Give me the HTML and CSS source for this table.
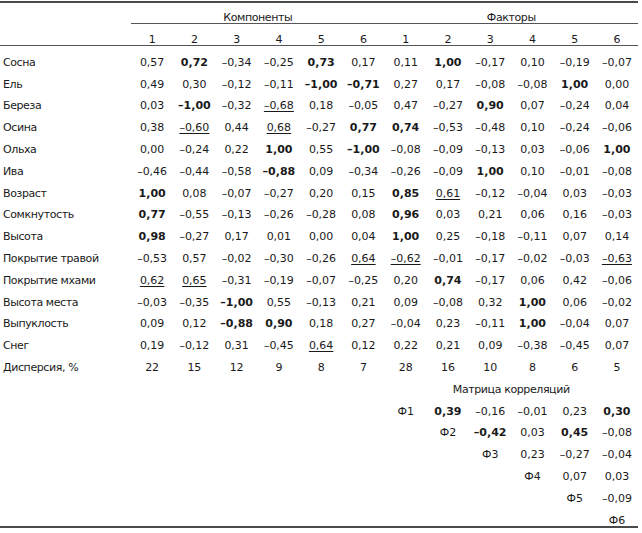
FILE: index.html
```html
<!DOCTYPE html>
<html lang="ru">
<head>
<meta charset="utf-8">
<title>Компоненты и факторы</title>
<link rel="stylesheet" href="styles.css">
</head>
<body>
<table class="tbl">
<colgroup>
<col class="c-label">
<col class="c-num"><col class="c-num"><col class="c-num"><col class="c-num"><col class="c-num"><col class="c-num">
<col class="c-num"><col class="c-num"><col class="c-num"><col class="c-num"><col class="c-num"><col class="c-num">
</colgroup>
<thead>
<tr class="h1">
<th></th>
<th colspan="6" class="grp">Компоненты</th>
<th colspan="6" class="grp">Факторы</th>
</tr>
<tr class="h2">
<th></th>
<th>1</th><th>2</th><th>3</th><th>4</th><th>5</th><th>6</th>
<th>1</th><th>2</th><th>3</th><th>4</th><th>5</th><th>6</th>
</tr>
</thead>
<tbody>
<tr><td class="lbl">Сосна</td><td>0,57</td><td><b>0,72</b></td><td>–0,34</td><td>–0,25</td><td><b>0,73</b></td><td>0,17</td><td>0,11</td><td><b>1,00</b></td><td>–0,17</td><td>0,10</td><td>–0,19</td><td>–0,07</td></tr>
<tr><td class="lbl">Ель</td><td>0,49</td><td>0,30</td><td>–0,12</td><td>–0,11</td><td><b>–1,00</b></td><td><b>–0,71</b></td><td>0,27</td><td>0,17</td><td>–0,08</td><td>–0,08</td><td><b>1,00</b></td><td>0,00</td></tr>
<tr><td class="lbl">Береза</td><td>0,03</td><td><b>–1,00</b></td><td>–0,32</td><td><u>–0,68</u></td><td>0,18</td><td>–0,05</td><td>0,47</td><td>–0,27</td><td><b>0,90</b></td><td>0,07</td><td>–0,24</td><td>0,04</td></tr>
<tr><td class="lbl">Осина</td><td>0,38</td><td><u>–0,60</u></td><td>0,44</td><td><u>0,68</u></td><td>–0,27</td><td><b>0,77</b></td><td><b>0,74</b></td><td>–0,53</td><td>–0,48</td><td>0,10</td><td>–0,24</td><td>–0,06</td></tr>
<tr><td class="lbl">Ольха</td><td>0,00</td><td>–0,24</td><td>0,22</td><td><b>1,00</b></td><td>0,55</td><td><b>–1,00</b></td><td>–0,08</td><td>–0,09</td><td>–0,13</td><td>0,03</td><td>–0,06</td><td><b>1,00</b></td></tr>
<tr><td class="lbl">Ива</td><td>–0,46</td><td>–0,44</td><td>–0,58</td><td><b>–0,88</b></td><td>0,09</td><td>–0,34</td><td>–0,26</td><td>–0,09</td><td><b>1,00</b></td><td>0,10</td><td>–0,01</td><td>–0,08</td></tr>
<tr><td class="lbl">Возраст</td><td><b>1,00</b></td><td>0,08</td><td>–0,07</td><td>–0,27</td><td>0,20</td><td>0,15</td><td><b>0,85</b></td><td><u>0,61</u></td><td>–0,12</td><td>–0,04</td><td>0,03</td><td>–0,03</td></tr>
<tr><td class="lbl">Сомкнутость</td><td><b>0,77</b></td><td>–0,55</td><td>–0,13</td><td>–0,26</td><td>–0,28</td><td>0,08</td><td><b>0,96</b></td><td>0,03</td><td>0,21</td><td>0,06</td><td>0,16</td><td>–0,03</td></tr>
<tr><td class="lbl">Высота</td><td><b>0,98</b></td><td>–0,27</td><td>0,17</td><td>0,01</td><td>0,00</td><td>0,04</td><td><b>1,00</b></td><td>0,25</td><td>–0,18</td><td>–0,11</td><td>0,07</td><td>0,14</td></tr>
<tr><td class="lbl">Покрытие травой</td><td>–0,53</td><td>0,57</td><td>–0,02</td><td>–0,30</td><td>–0,26</td><td><u>0,64</u></td><td><u>–0,62</u></td><td>–0,01</td><td>–0,17</td><td>–0,02</td><td>–0,03</td><td><u>–0,63</u></td></tr>
<tr><td class="lbl">Покрытие мхами</td><td><u>0,62</u></td><td><u>0,65</u></td><td>–0,31</td><td>–0,19</td><td>–0,07</td><td>–0,25</td><td>0,20</td><td><b>0,74</b></td><td>–0,17</td><td>0,06</td><td>0,42</td><td>–0,06</td></tr>
<tr><td class="lbl">Высота места</td><td>–0,03</td><td>–0,35</td><td><b>–1,00</b></td><td>0,55</td><td>–0,13</td><td>0,21</td><td>0,09</td><td>–0,08</td><td>0,32</td><td><b>1,00</b></td><td>0,06</td><td>–0,02</td></tr>
<tr><td class="lbl">Выпуклость</td><td>0,09</td><td>0,12</td><td><b>–0,88</b></td><td><b>0,90</b></td><td>0,18</td><td>0,27</td><td>–0,04</td><td>0,23</td><td>–0,11</td><td><b>1,00</b></td><td>–0,04</td><td>0,07</td></tr>
<tr><td class="lbl">Снег</td><td>0,19</td><td>–0,12</td><td>0,31</td><td>–0,45</td><td><u>0,64</u></td><td>0,12</td><td>0,22</td><td>0,21</td><td>0,09</td><td>–0,38</td><td>–0,45</td><td>0,07</td></tr>
<tr><td class="lbl">Дисперсия, %</td><td>22</td><td>15</td><td>12</td><td>9</td><td>8</td><td>7</td><td>28</td><td>16</td><td>10</td><td>8</td><td>6</td><td>5</td></tr>
<tr><td></td><td colspan="6"></td><td colspan="6" class="title">Матрица корреляций</td></tr>
<tr><td></td><td colspan="6"></td><td>Ф1</td><td><b>0,39</b></td><td>–0,16</td><td>–0,01</td><td>0,23</td><td><b>0,30</b></td></tr>
<tr><td></td><td colspan="6"></td><td></td><td>Ф2</td><td><b>–0,42</b></td><td>0,03</td><td><b>0,45</b></td><td>–0,08</td></tr>
<tr><td></td><td colspan="6"></td><td></td><td></td><td>Ф3</td><td>0,23</td><td>–0,27</td><td>–0,04</td></tr>
<tr><td></td><td colspan="6"></td><td></td><td></td><td></td><td>Ф4</td><td>0,07</td><td>0,03</td></tr>
<tr><td></td><td colspan="6"></td><td></td><td></td><td></td><td></td><td>Ф5</td><td>–0,09</td></tr>
<tr><td></td><td colspan="6"></td><td></td><td></td><td></td><td></td><td></td><td>Ф6</td></tr>
</tbody>
</table>
</body>
</html>
```
FILE: styles.css
```css
html, body {
  margin: 0;
  padding: 0;
  background: #ffffff;
}

body {
  padding-top: 1px;
}

.tbl {
  width: 638px;
  table-layout: fixed;
  border-collapse: collapse;
  font-family: "DejaVu Sans", Verdana, sans-serif;
  font-size: 11px;
  color: #1a1a1a;
  border-top: 2px solid #4a4a4a;
  border-bottom: 2px solid #4a4a4a;
}

.c-label { width: 131px; }
.c-num { width: 42.25px; }

.tbl th,
.tbl td {
  padding: 0;
  height: 21.8px;
  line-height: 11px;
  vertical-align: bottom;
  text-align: center;
  font-weight: normal;
  white-space: nowrap;
}

.tbl .lbl {
  text-align: left;
  padding-left: 3px;
  letter-spacing: -0.4px;
}

.tbl .grp,
.tbl .title {
  letter-spacing: -0.4px;
}

.h1 th {
  height: 20px;
}

.h1 .grp {
  border-bottom: 1px solid #555555;
}

.h2 th {
  height: 21px;
  border-bottom: 1px solid #555555;
}

.tbl b {
  font-weight: bold;
}

.tbl u {
  text-decoration: underline;
  text-underline-offset: 2px;
}
```
